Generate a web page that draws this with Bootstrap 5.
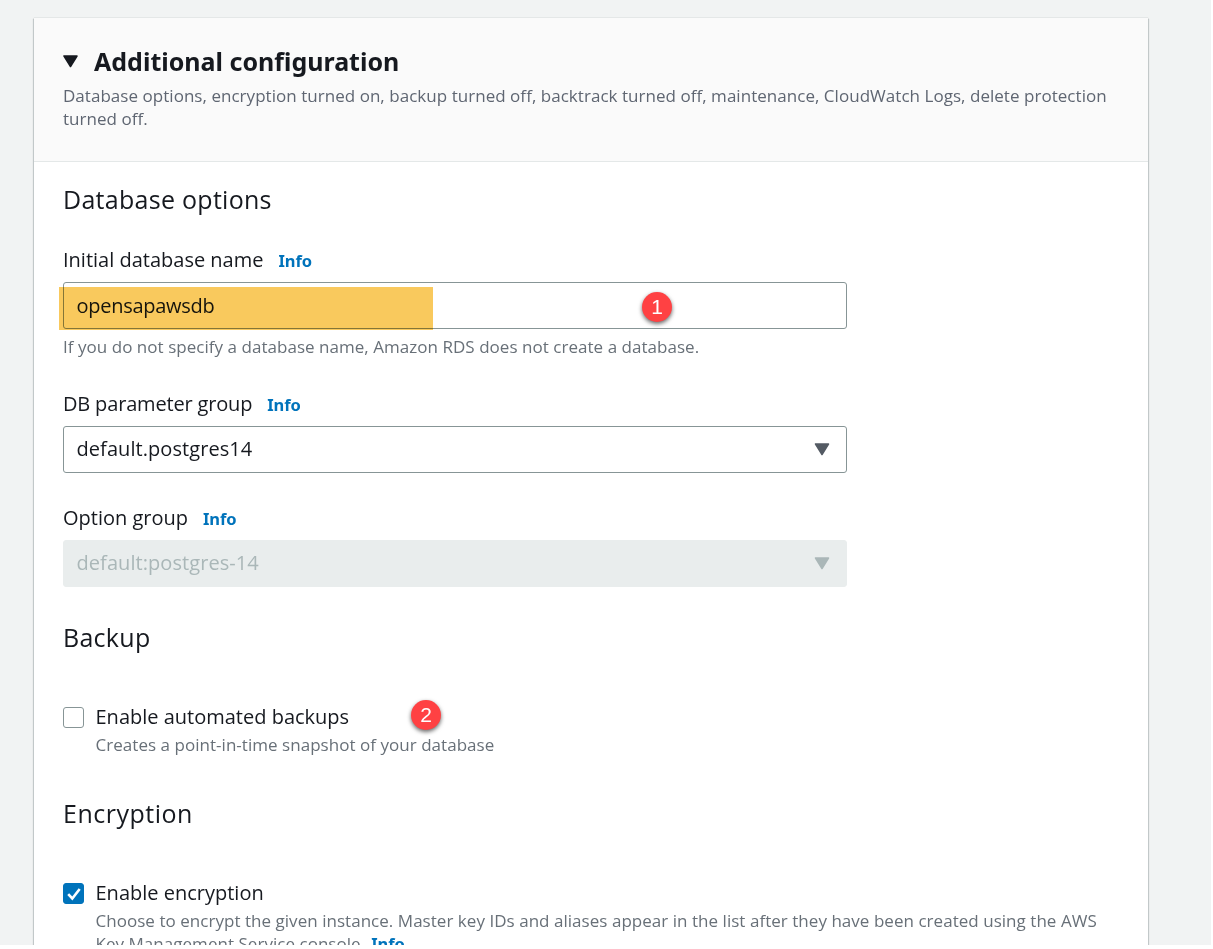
<!DOCTYPE html>
<html lang="en">
<head>
<meta charset="utf-8">
<meta name="viewport" content="width=device-width, initial-scale=1">
<title>Additional configuration</title>
<link href="https://cdn.jsdelivr.net/npm/bootstrap@5.3.0/dist/css/bootstrap.min.css" rel="stylesheet">
<style>
body{font-family:"Open Sans","Noto Sans",sans-serif;color:#16191f;background:#fff;height:949px;overflow:hidden}
.console{width:1211px;height:945px;background:#f1f3f3;padding:18px 0 0 34px}
.panel{width:1114px;height:980px;color:inherit;border:0;border-radius:0;box-shadow:0 0 1px 0 rgba(0,28,36,.3),1px 1px 1px 0 rgba(0,28,36,.15),-1px 1px 1px 0 rgba(0,28,36,.15)}
.panel-head{height:144px;padding:28px 29px 0;background:#fafafa;border-bottom:1px solid #e4e8e8}
.panel-title{font:700 25px/30px "Noto Sans",sans-serif;margin:0}
.panel-title svg{margin:1px 16px 0 0}
.panel-body{padding:21px 29px 0}
.desc{font-size:17px;line-height:23px;letter-spacing:.035px;color:#687078;margin:0}
.panel-head .desc{color:#5f6672;margin-top:8px}
.sect{font-size:25px;line-height:32px;letter-spacing:.28px;font-weight:400;margin:0}
.sect-backup{margin-top:34px}
.sect-encryption{margin-top:41px;letter-spacing:.5px}
.lbl{font-size:20px;line-height:26px;letter-spacing:0}
.lbl-name{margin-top:32px}
.lbl-param{margin-top:33px;letter-spacing:-.17px}
.lbl-option{margin-top:32px}
.info{font:700 16.5px/23px "Noto Sans",sans-serif;letter-spacing:-.1px;color:#0073bb;text-decoration:none}
.lbl .info{margin-left:15px}
.desc .info{margin-left:6px}
.hint{margin-top:6px}
.fieldbox{width:784px;height:47px;margin-top:9px;border:1.5px solid #879596;border-radius:3px;padding:0 16px 2px 12.5px;font-size:20px;background:#fff}
.fieldbox svg{margin-top:2px}
.fieldbox.off{background:#e9eded;border-color:#e9eded;color:#aab7b8}
.fieldbox.entry{padding-bottom:0}
.tight{letter-spacing:-.27px}
.loose{letter-spacing:.07px}
.hilite{left:-4px;top:5px;width:374px;height:43px;background:#f9c95d;mix-blend-mode:multiply}
.pin{width:30px;height:30px;background:#ff4143;color:#fff;border-radius:50%;font:21px/30px "Liberation Sans",sans-serif;box-shadow:0 2px 4px rgba(0,0,0,.6)}
.pin-name{left:579px;top:10px}
.pin-backup{left:348px;top:-4px}
.tick{width:21px;height:21px;margin:3px 0 0;border:1.5px solid #879596;border-radius:3px}
.tick.on{background:#0073bb;border-color:#0073bb}
.option{gap:11.5px;margin-top:51px}
.option .desc{margin-top:3px}
</style>
</head>
<body>
<main class="console overflow-hidden">
<section class="card panel">
  <header class="panel-head">
    <h1 class="panel-title d-flex align-items-center"><svg width="15" height="13" viewBox="0 0 15 13"><path d="M1 1h13L7.5 11.5z" fill="#16191f" stroke="#16191f" stroke-width="1.5" stroke-linejoin="round"/></svg>Additional configuration</h1>
    <p class="desc">Database options, encryption turned on, backup turned off, backtrack turned off, maintenance, CloudWatch Logs, delete protection<br>turned off.</p>
  </header>
  <div class="panel-body">
    <h2 class="sect">Database options</h2>

    <div class="lbl lbl-name d-flex align-items-center"><span>Initial database name</span><a class="info" href="#">Info</a></div>
    <div class="position-relative">
      <div class="fieldbox entry d-flex align-items-center"><span class="tight">opensapawsdb</span></div>
      <div class="hilite position-absolute"></div>
      <span class="pin pin-name position-absolute text-center">1</span>
    </div>
    <p class="desc hint">If you do not specify a database name, Amazon RDS does not create a database.</p>

    <div class="lbl lbl-param d-flex align-items-center"><span>DB parameter group</span><a class="info" href="#">Info</a></div>
    <div class="fieldbox d-flex align-items-center justify-content-between"><span class="loose">default.postgres14</span><svg width="16" height="13" viewBox="0 0 16 13"><path d="M1.5 1h13L8 11.5z" fill="#545b64" stroke="#545b64" stroke-width="1.5" stroke-linejoin="round"/></svg></div>

    <div class="lbl lbl-option d-flex align-items-center"><span>Option group</span><a class="info" href="#">Info</a></div>
    <div class="fieldbox off d-flex align-items-center justify-content-between"><span class="loose">default:postgres-14</span><svg width="16" height="13" viewBox="0 0 16 13"><path d="M1.5 1h13L8 11.5z" fill="#aab7b8" stroke="#aab7b8" stroke-width="1.5" stroke-linejoin="round"/></svg></div>

    <h2 class="sect sect-backup">Backup</h2>
    <div class="option d-flex position-relative">
      <span class="tick flex-shrink-0"></span>
      <div><div class="lbl">Enable automated backups</div><p class="desc">Creates a point-in-time snapshot of your database</p></div>
      <span class="pin pin-backup position-absolute text-center">2</span>
    </div>

    <h2 class="sect sect-encryption">Encryption</h2>
    <div class="option d-flex">
      <span class="tick on flex-shrink-0 d-flex align-items-center justify-content-center"><svg width="16" height="16" viewBox="0 0 16 16"><path d="M2.2 8.2l4.1 4.3L13.7 3" fill="none" stroke="#fff" stroke-width="2.6"/></svg></span>
      <div><div class="lbl">Enable encryption</div><p class="desc">Choose to encrypt the given instance. Master key IDs and aliases appear in the list after they have been created using the AWS<br>Key Management Service console.<a class="info" href="#">Info</a></p></div>
    </div>
  </div>
</section>
</main>
<script src="https://cdn.jsdelivr.net/npm/bootstrap@5.3.0/dist/js/bootstrap.bundle.min.js"></script>
</body>
</html>
